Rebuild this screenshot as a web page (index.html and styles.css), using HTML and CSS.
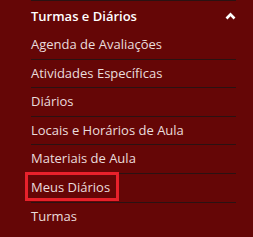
FILE: index.html
```html
<!doctype html>
<html><head>
<meta charset="UTF-8">
<title>Turmas e Diários</title>
<link rel="stylesheet" href="styles.css">
</head>
<body>
<div class="menu">
  <div class="menuHead">
    <span>Turmas e Diários</span>
    <svg class="chev" width="11" height="8" viewBox="0 0 11 8"><polyline points="1.5,6.5 5.5,2.3 9.5,6.5" fill="none" stroke="#fff" stroke-width="2.6"/></svg>
  </div>
  <ul class="items">
    <li>Agenda de Avaliações</li>
    <li>Atividades Específicas</li>
    <li>Diários</li>
    <li>Locais e Horários de Aula</li>
    <li>Materiais de Aula</li>
    <li><span class="mark">Meus Diários</span></li>
    <li>Turmas</li>
  </ul>
</div>
</body>
</html>
```

FILE: styles.css
```css
body {
    margin: 0;
    background-color: #650606;
    font-family: "Open Sans", sans-serif;
    font-size: 13px;
}
.menu {
    margin-left: 31px;
    width: 205px;
    border-top: 1px solid #2a1212;
}
.menuHead {
    display: flex;
    justify-content: space-between;
    align-items: center;
    height: 30px;
    color: #fff;
    font-weight: 600;
}
.chev {
    margin-right: 0;
}
.items {
    list-style: none;
    margin: 0;
    padding: 0;
}
.items li {
    color: #eadcdc;
    line-height: 17.6px;
    padding: 5px 0;
    border-bottom: 1px solid #2a1212;
}
.items li:last-child {
    border-bottom: none;
}
.mark {
    position: relative;
}
.mark::after {
    content: "";
    position: absolute;
    left: -6px;
    right: -9px;
    top: -6px;
    bottom: -5px;
    border: 3px solid #e8212b;
}
```
